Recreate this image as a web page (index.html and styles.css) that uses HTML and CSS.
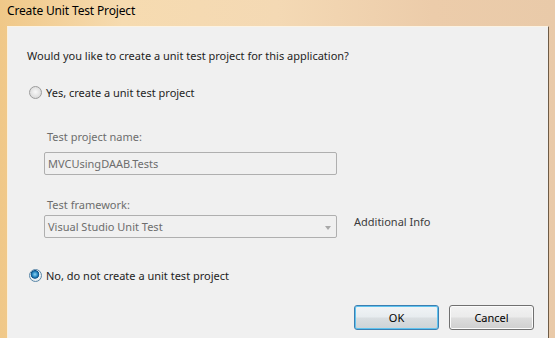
FILE: index.html
```html
<!DOCTYPE html>
<html>
<head>
  <title>Create Unit Test Project</title>
  <link rel="stylesheet" href="styles.css">
</head>
<body>
  <div class="window">
    <div class="titlebar">Create Unit Test Project</div>
    <div class="frame">
      <div class="client">
        <p class="question">Would you like to create a unit test project for this application?</p>

        <label class="option">
          <span class="radio"></span>
          Yes, create a unit test project
        </label>

        <div class="details">
          <div class="field-label">Test project name:</div>
          <div class="textbox">MVCUsingDAAB.Tests</div>

          <div class="field-label">Test framework:</div>
          <div class="framework-row">
            <div class="combo">
              <span>Visual Studio Unit Test</span>
              <span class="arrow"></span>
            </div>
            <span class="info">Additional Info</span>
          </div>
        </div>

        <label class="option option-no">
          <span class="radio checked"></span>
          No, do not create a unit test project
        </label>

        <div class="buttons">
          <button class="btn default">OK</button>
          <button class="btn">Cancel</button>
        </div>
      </div>
    </div>
  </div>
</body>
</html>
```

FILE: styles.css
```css
body {
  margin: 0;
  height: 338px;
  overflow: hidden;
  font-family: "Noto Sans", "Open Sans", sans-serif;
  font-size: 11px;
}

.window {
  display: flex;
  flex-direction: column;
  height: 100%;
  background: linear-gradient(to right, #f0c888 0%, #f6dbb0 22%, #f4d9b4 50%, #ecccaa 78%, #e9caa9 100%);
}

.titlebar {
  height: 26px;
  padding-left: 7px;
  line-height: 22px;
  font-size: 12px;
  letter-spacing: -0.15px;
  color: #000;
  box-sizing: border-box;
}

.frame {
  flex: 1;
  display: flex;
  padding: 0 6px 0 7px;
}

.client {
  flex: 1;
  background: #f0f0f0;
  border-top: 1px solid #fbf3e4;
  border-left: 1px solid #fbf0dc;
  border-right: 1px solid #6e5b46;
  padding: 21px 14px 0 19px;
  color: #1e1e1e;
}

.question {
  margin: 0;
  line-height: 16px;
}

.option {
  display: flex;
  align-items: center;
  height: 16px;
  margin-top: 20px;
  padding-left: 2px;
}

.option-no {
  margin-top: 29px;
}

.radio {
  width: 11px;
  height: 11px;
  border-radius: 50%;
  border: 1px solid #9c9c9c;
  background: radial-gradient(circle at 50% 45%, #f8f8f8 0%, #e2e2e2 55%, #cfcfcf 100%);
  margin-right: 4px;
}

.radio.checked {
  border-color: #5a87a8;
  background: radial-gradient(circle at 45% 40%, #8fd3f4 0%, #2a8ac4 28%, #0f4f86 44%, #eef2f5 52%, #d6dde3 100%);
}

.details {
  padding-left: 17px;
  margin-top: 29px;
}

.field-label {
  line-height: 16px;
  padding-left: 3px;
  color: #6d6d6d;
}

.textbox,
.combo {
  width: 293px;
  height: 23px;
  box-sizing: border-box;
  border: 1px solid #afafaf;
  border-radius: 2px;
  background: #f0f0f0;
  color: #6d6d6d;
  padding-left: 3px;
  line-height: 21px;
}

.textbox {
  margin-top: 7px;
  margin-bottom: 22px;
}

.framework-row {
  display: flex;
  align-items: flex-start;
  margin-top: 2px;
}

.combo {
  display: flex;
  justify-content: space-between;
  align-items: center;
  padding-right: 5px;
}

.arrow {
  width: 0;
  height: 0;
  border-left: 3px solid transparent;
  border-right: 3px solid transparent;
  border-top: 4px solid #a8a8a8;
  margin-top: 2px;
}

.info {
  margin-left: 17px;
  margin-top: -1px;
  line-height: 16px;
  color: #3c3c3c;
}

.buttons {
  display: flex;
  justify-content: flex-end;
  gap: 10px;
  margin-top: 22px;
}

.btn {
  width: 85px;
  height: 25px;
  font-family: inherit;
  font-size: 11px;
  color: #000;
  border: 1px solid #707070;
  border-radius: 3px;
  background: linear-gradient(#f2f2f2 0%, #ebebeb 48%, #dddddd 52%, #cfcfcf 100%);
  box-shadow: inset 0 0 0 1px #fbfbfb;
  padding: 0;
}

.btn.default {
  border-color: #3c7fb1;
  box-shadow: inset 0 0 0 1px #5fc3ef;
  background: linear-gradient(#f1f4f6 0%, #e7ecef 48%, #d9dee1 52%, #cdd3d6 100%);
}
```
